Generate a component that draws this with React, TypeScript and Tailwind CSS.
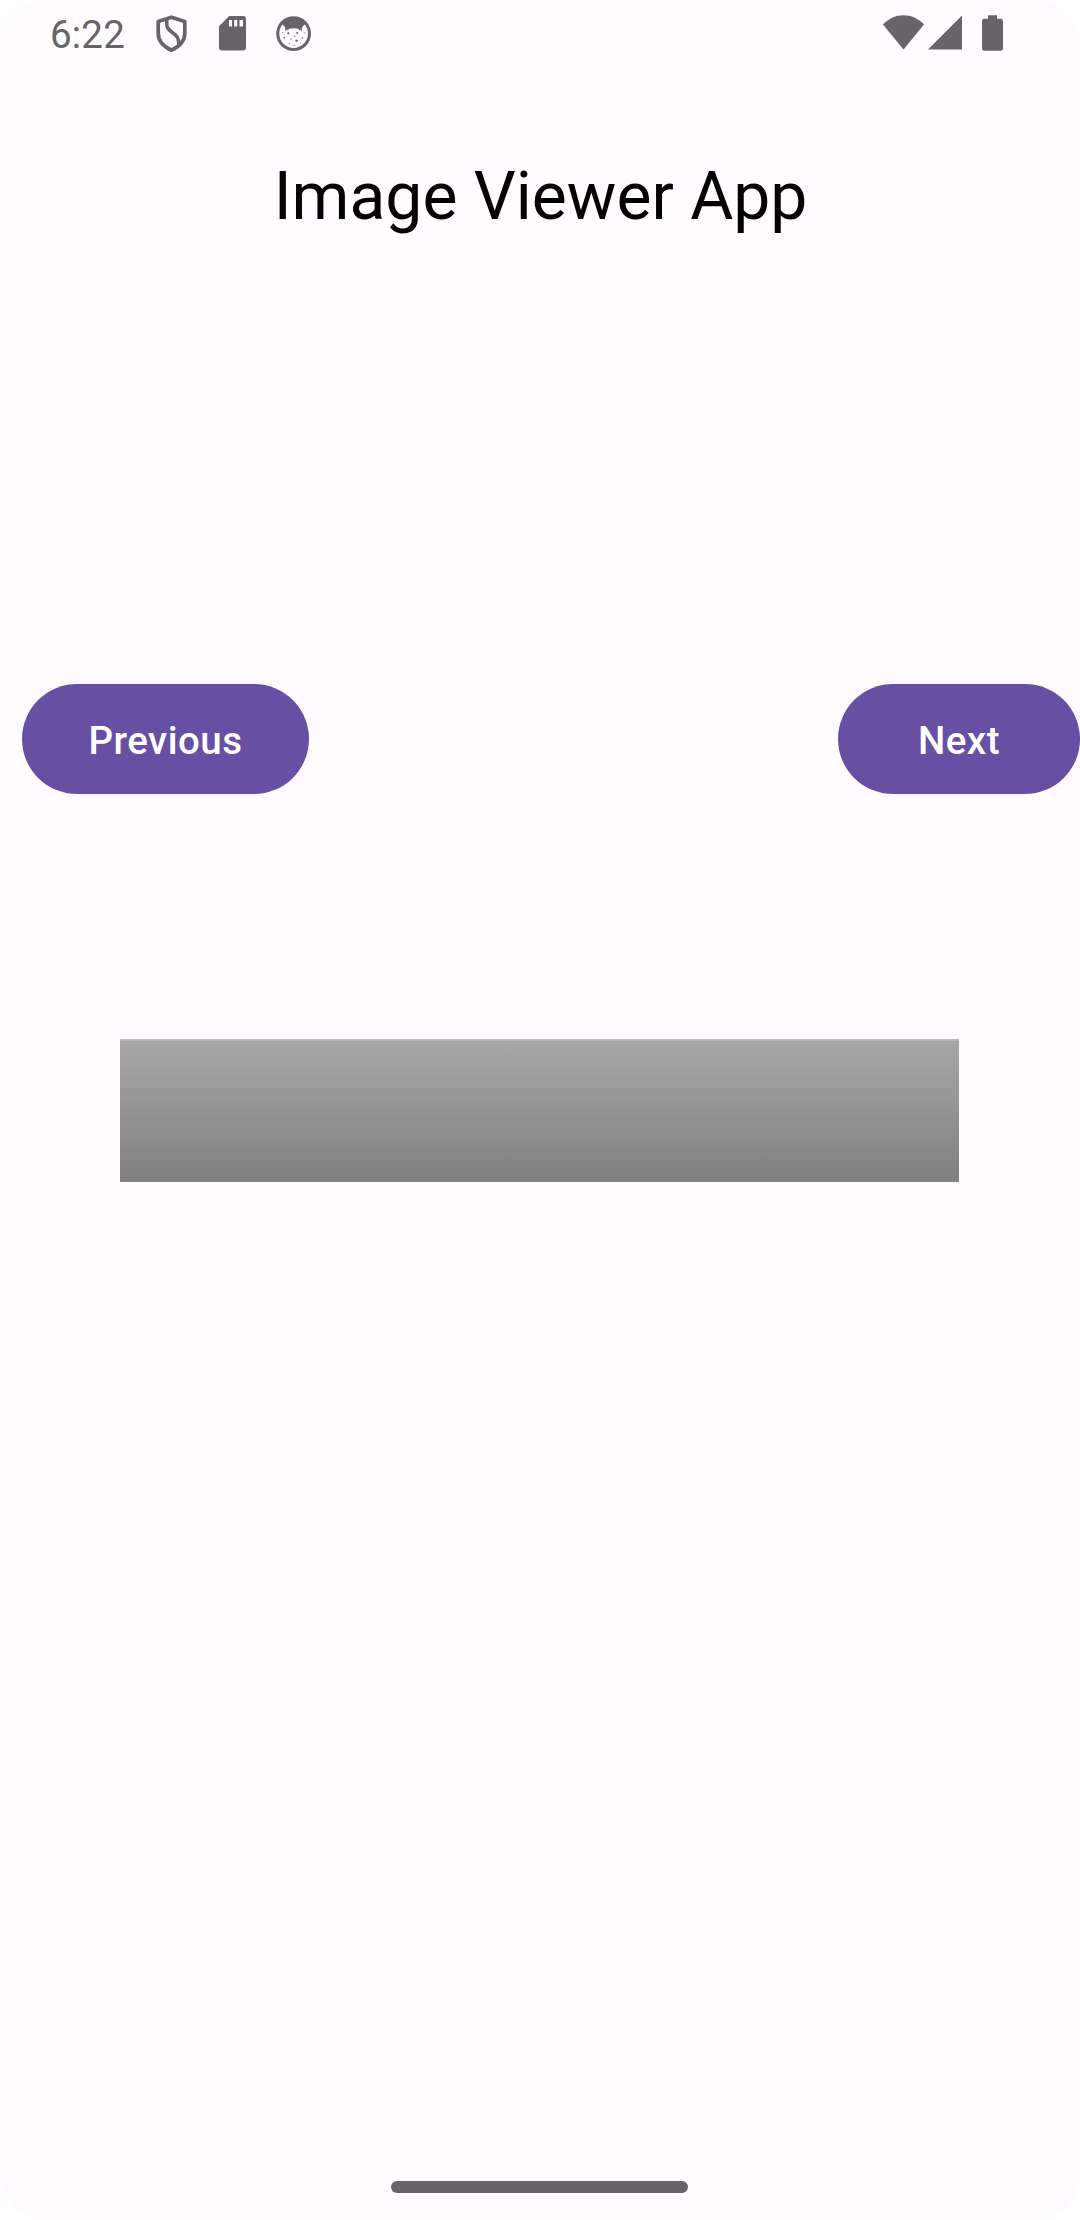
import React from "react";

function ShieldIcon() {
  return (
    <svg className="ml-[32px] h-[38px] w-[32px]" viewBox="0 0 32 38" fill="none" stroke="#676468" strokeWidth="3.7" strokeLinejoin="round">
      <path d="M15.4 2.2 L28.8 6.6 V18 C28.8 26.5 23.5 31.6 15.4 35.2 C7.5 31.6 2.2 26.5 2.2 18 V6.6 Z" />
      <path strokeWidth="3.5" d="M10.8 4.5 V9.5 C10.8 13.5 13.5 15.4 17 18 C21 21 23.2 23.5 22.6 29.5" />
    </svg>
  );
}

function SdCardIcon() {
  return (
    <svg className="ml-[31px] h-[35px] w-[27px]" viewBox="0 0 27 35">
      <path
        fill="#676468"
        fillRule="evenodd"
        d="M10.2 0 H24 a3 3 0 0 1 3 3 V31.5 a3 3 0 0 1 -3 3 H3 a3 3 0 0 1 -3 -3 V10.2 Z M10 4 V10.5 H13 V4 Z M15.2 4 V10.5 H18.2 V4 Z M20.5 4 V10.5 H24 V4 Z"
      />
    </svg>
  );
}

function CatIcon() {
  return (
    <svg className="ml-[30px] h-[36px] w-[36px]" viewBox="0 0 36 36">
      <circle cx="17.6" cy="17.6" r="17.4" fill="#676468" />
      <path
        fill="#fffbff"
        d="M6.4 8.6 C7.4 9.2 8.6 10.6 9.5 12.6 L9.2 15.4 L11 13.4 L12 14.6 L13 12.8 C16 12.1 19.5 12.1 22.4 12.8 L23.4 14.6 L24.4 13.4 L26.2 15.4 L25.8 12.6 C26.6 10.6 27.8 9.2 28.8 8.6 C31 11 32 14.5 32 17.8 C32 25.7 25.6 32 17.6 32 C9.6 32 3.3 25.7 3.3 17.8 C3.3 14.5 4.3 11 6.4 8.6 Z"
      />
      <g fill="#676468">
        <circle cx="12.3" cy="17.3" r="1.1" />
        <circle cx="21.2" cy="17" r="1.1" />
        <circle cx="20.6" cy="24.6" r="1.2" />
        <circle cx="8.4" cy="21.6" r="0.9" />
        <circle cx="15" cy="23" r="0.7" />
        <circle cx="26.4" cy="22" r="0.8" />
        <circle cx="18.6" cy="20.4" r="0.6" />
        <circle cx="13.4" cy="27.6" r="0.6" />
        <circle cx="24.6" cy="27" r="0.6" />
        <circle cx="28.4" cy="17" r="0.6" />
        <circle cx="6.8" cy="16.4" r="0.5" />
        <circle cx="18" cy="29.4" r="0.6" />
      </g>
    </svg>
  );
}

function StatusBar() {
  return (
    <header className="flex h-[66px] items-start pl-[50px] pr-[77px]">
      <span className="mt-[11px] w-[74px] whitespace-nowrap text-[38.5px] leading-[48px] tracking-[0.2px] text-[#676468]">6:22</span>
      <div className="mt-[15px] flex items-start">
        <ShieldIcon />
        <div className="pt-px">
          <SdCardIcon />
        </div>
        <div className="pt-px">
          <CatIcon />
        </div>
      </div>
      <div className="ml-auto mt-[15px] flex items-start">
        <svg className="h-[35px] w-[41px]" viewBox="0 0 41 35">
          <path fill="#676468" d="M20.5 34.4 L0 9.4 C6 3.4 12.6 0.2 20.5 0.2 C28.4 0.2 35 3.4 41 9.4 Z" />
        </svg>
        <svg className="ml-[4px] h-[35px] w-[34px]" viewBox="0 0 34 35">
          <path fill="#676468" d="M34 0.4 V34.6 H0 Z" />
        </svg>
        <svg className="ml-[20px] h-[36px] w-[21px]" viewBox="0 0 21 36">
          <path fill="#676468" d="M6 0.2 H15 V3.8 H18.6 A2.4 2.4 0 0 1 21 6.2 V33.4 A2.4 2.4 0 0 1 18.6 35.8 H2.4 A2.4 2.4 0 0 1 0 33.4 V6.2 A2.4 2.4 0 0 1 2.4 3.8 H6 Z" />
        </svg>
      </div>
    </header>
  );
}

export default function App() {
  return (
    <div className="h-[2220px] w-[1080px] overflow-hidden bg-white font-['Roboto',sans-serif]">
      <div className="flex h-full flex-col rounded-[46px] bg-[#fffbff]">
        <StatusBar />
        <h1 className="mt-[91px] pl-px text-center text-[66px] leading-[80px] text-black">Image Viewer App</h1>
        <div className="mt-[447px] flex justify-between pl-[22px]">
          <button className="h-[110px] w-[287px] rounded-full bg-[#6750a4] pt-[3px] text-[38.5px] font-medium leading-[48px] tracking-[0.5px] text-white">
            Previous
          </button>
          <button className="h-[110px] w-[242px] rounded-full bg-[#6750a4] pt-[3px] text-[38.5px] font-medium leading-[48px] tracking-[0.5px] text-white">
            Next
          </button>
        </div>
        <div className="ml-[120px] mt-[245px] h-[143px] w-[839px] border-t-2 border-[#bbbbbd] bg-linear-to-b from-[#a7a7a7] to-[#808080]" />
        <div className="mb-[27px] ml-[391px] mt-auto h-[12px] w-[297px] rounded-full bg-[#676468]" />
      </div>
    </div>
  );
}
